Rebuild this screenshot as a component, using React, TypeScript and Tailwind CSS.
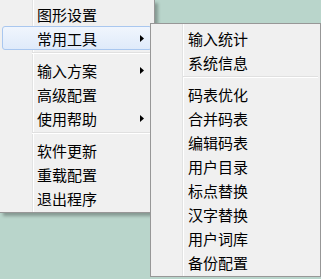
import React from 'react';

type Entry = { label: string; sub?: boolean; active?: boolean } | 'sep';

const MAIN_MENU: Entry[] = [
  { label: '图形设置' },
  { label: '常用工具', sub: true, active: true },
  'sep',
  { label: '输入方案', sub: true },
  { label: '高级配置' },
  { label: '使用帮助', sub: true },
  'sep',
  { label: '软件更新' },
  { label: '重载配置' },
  { label: '退出程序' },
];

const TOOLS_MENU: Entry[] = [
  { label: '输入统计' },
  { label: '系统信息' },
  'sep',
  { label: '码表优化' },
  { label: '合并码表' },
  { label: '编辑码表' },
  { label: '用户目录' },
  { label: '标点替换' },
  { label: '汉字替换' },
  { label: '用户词库' },
  { label: '备份配置' },
];

const Arrow = () => (
  <svg width="4" height="7" viewBox="0 0 4 7" className="shrink-0">
    <path d="M0 0 L4 3.5 L0 7 Z" fill="#000" />
  </svg>
);

const MenuItems: React.FC<{ entries: Entry[] }> = ({ entries }) => (
  <>
    {entries.map((entry, idx) =>
      entry === 'sep' ? (
        <div key={idx} className="h-[8px] pl-[30px] pt-[2px]">
          <div className="h-[1px] bg-[#e0e0e0]" />
          <div className="h-[1px] bg-white" />
        </div>
      ) : (
        <div
          key={idx}
          className={`h-[24px] flex items-center justify-between pl-[34px] pr-[7px] rounded-[3px] border ${
            entry.active
              ? 'border-[#a9c7ef] bg-[linear-gradient(to_bottom,#f0f5fd,#dfeafa)]'
              : 'border-transparent'
          }`}
        >
          <span className="text-[15px] leading-none text-black">{entry.label}</span>
          {entry.sub && <Arrow />}
        </div>
      )
    )}
  </>
);

export default function App() {
  return (
    <div
      className="relative w-[321px] h-[279px] overflow-hidden bg-[#b9d5cb]"
      style={{ fontFamily: '"Noto Sans CJK SC", "Noto Sans", sans-serif' }}
    >
      {/* Main context menu */}
      <div className="w-[155px] flex flex-col pt-[2px] pb-[2px] pl-[2px] pr-[2px] bg-[#f0f0f0] border-r border-b border-[#979797] shadow-[3px_3px_3px_rgba(0,0,0,0.28)] bg-[linear-gradient(to_right,transparent_32px,#e2e3e3_32px,#e2e3e3_33px,#ffffff_33px,#ffffff_34px,transparent_34px)]">
        <MenuItems entries={MAIN_MENU} />
      </div>

      {/* 常用工具 submenu */}
      <div className="absolute left-[150px] top-[23px] w-[171px] flex flex-col p-[2px] bg-[#f0f0f0] border border-[#979797] bg-[linear-gradient(to_right,transparent_31px,#e2e3e3_31px,#e2e3e3_32px,#ffffff_32px,#ffffff_33px,transparent_33px)]">
        <MenuItems entries={TOOLS_MENU} />
      </div>
    </div>
  );
}
